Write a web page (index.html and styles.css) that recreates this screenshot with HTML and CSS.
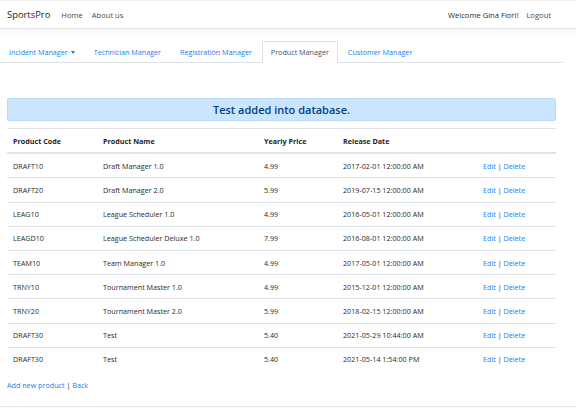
FILE: index.html
```html
<!DOCTYPE html>
<html lang="en">
<head>
<meta charset="utf-8">
<title>SportsPro</title>
<link rel="stylesheet" href="styles.css">
</head>
<body>
<header class="navbar">
  <a class="brand" href="#">SportsPro</a>
  <nav class="nav-left">
    <a href="#">Home</a>
    <a href="#">About us</a>
  </nav>
  <div class="nav-right">
    <span class="welcome">Welcome Gina Fiori!</span>
    <a href="#">Logout</a>
  </div>
</header>

<ul class="tabs">
  <li><a href="#">Incident Manager<span class="caret"></span></a></li>
  <li><a href="#">Technician Manager</a></li>
  <li><a href="#">Registration Manager</a></li>
  <li class="active"><a href="#">Product Manager</a></li>
  <li><a href="#">Customer Manager</a></li>
</ul>

<main class="content">
  <div class="alert">Test added into database.</div>

  <table class="products">
    <thead>
      <tr>
        <th class="c-code">Product Code</th>
        <th class="c-name">Product Name</th>
        <th class="c-price">Yearly Price</th>
        <th class="c-date">Release Date</th>
        <th class="c-act"></th>
      </tr>
    </thead>
    <tbody>
      <tr><td>DRAFT10</td><td>Draft Manager 1.0</td><td>4.99</td><td>2017-02-01 12:00:00 AM</td><td><a href="#">Edit</a> | <a href="#">Delete</a></td></tr>
      <tr><td>DRAFT20</td><td>Draft Manager 2.0</td><td>5.99</td><td>2019-07-15 12:00:00 AM</td><td><a href="#">Edit</a> | <a href="#">Delete</a></td></tr>
      <tr><td>LEAG10</td><td>League Scheduler 1.0</td><td>4.99</td><td>2016-05-01 12:00:00 AM</td><td><a href="#">Edit</a> | <a href="#">Delete</a></td></tr>
      <tr><td>LEAGD10</td><td>League Scheduler Deluxe 1.0</td><td>7.99</td><td>2016-08-01 12:00:00 AM</td><td><a href="#">Edit</a> | <a href="#">Delete</a></td></tr>
      <tr><td>TEAM10</td><td>Team Manager 1.0</td><td>4.99</td><td>2017-05-01 12:00:00 AM</td><td><a href="#">Edit</a> | <a href="#">Delete</a></td></tr>
      <tr><td>TRNY10</td><td>Tournament Master 1.0</td><td>4.99</td><td>2015-12-01 12:00:00 AM</td><td><a href="#">Edit</a> | <a href="#">Delete</a></td></tr>
      <tr><td>TRNY20</td><td>Tournament Master 2.0</td><td>5.99</td><td>2018-02-15 12:00:00 AM</td><td><a href="#">Edit</a> | <a href="#">Delete</a></td></tr>
      <tr><td>DRAFT30</td><td>Test</td><td>5.40</td><td>2021-05-29 10:44:00 AM</td><td><a href="#">Edit</a> | <a href="#">Delete</a></td></tr>
      <tr><td>DRAFT30</td><td>Test</td><td>5.40</td><td>2021-05-14 1:54:00 PM</td><td><a href="#">Edit</a> | <a href="#">Delete</a></td></tr>
    </tbody>
  </table>

  <p class="bottom-links"><a href="#">Add new product</a> | <a href="#">Back</a></p>
</main>

<footer class="footer"></footer>
</body>
</html>
```

FILE: styles.css
```css
* { box-sizing: border-box; }

html, body {
  margin: 0;
  padding: 0;
  background: #fff;
}

body {
  font-family: "Open Sans", "Noto Sans", sans-serif;
  font-size: 7.2px;
  line-height: 12px;
  color: #212529;
}

a {
  color: #1a7ef0;
  text-decoration: none;
}

/* Navbar */
.navbar {
  height: 29px;
  display: flex;
  align-items: center;
  padding: 0 25px 0 7px;
  border-top: 1px solid #f0f0f0;
  border-bottom: 1px solid #e5e5e5;
  box-shadow: 0 2px 6px rgba(0, 0, 0, 0.05);
  font-size: 7.6px;
}

.brand {
  font-size: 9.4px;
  color: #222;
  margin-right: 11px;
}

.nav-left {
  display: flex;
  gap: 9px;
}

.nav-left a,
.nav-right a {
  color: #4a4a4a;
}

.nav-right {
  margin-left: auto;
  display: flex;
  gap: 8px;
}

.welcome {
  color: #2a2a2a;
}

/* Tabs */
.tabs {
  list-style: none;
  margin: 12px 13px 0 0;
  padding: 0;
  display: flex;
  border-bottom: 1px solid #dee2e6;
}

.tabs li {
  margin-bottom: -1px;
}

.tabs a {
  display: block;
  padding: 4px 8px;
  border: 1px solid transparent;
  border-top-left-radius: 2px;
  border-top-right-radius: 2px;
  margin-right: 1px;
}

.tabs .active a {
  color: #495057;
  background: #fff;
  border-color: #dee2e6 #dee2e6 #fff;
}

.caret {
  display: inline-block;
  margin-left: 3px;
  vertical-align: 1px;
  border-top: 3px solid;
  border-left: 2.5px solid transparent;
  border-right: 2.5px solid transparent;
}

/* Content */
.content {
  padding: 0 20px 0 7px;
}

.alert {
  margin-top: 35px;
  height: 23px;
  line-height: 21px;
  text-align: center;
  font-size: 11px;
  font-weight: 600;
  color: #004085;
  background: #cce5ff;
  border: 1px solid #b8daff;
  border-radius: 2px;
}

/* Table */
.products {
  width: 100%;
  margin-top: 7px;
  border-collapse: collapse;
}

.products th,
.products td {
  text-align: left;
  padding: 5.6px 6px;
  border-top: 1px solid #dee2e6;
  white-space: nowrap;
}

.products th {
  font-weight: 700;
  color: #1e1e1e;
  border-bottom: 2px solid #e3e6e9;
}

.c-code { width: 90px; }
.c-name { width: 161px; }
.c-price { width: 79px; }
.c-date { width: 140px; }

.products td {
  color: #2b2b2b;
}

.bottom-links {
  margin: 8px 0 0;
}

.footer {
  margin-top: 15px;
  border-top: 1px solid #e5e5e5;
  height: 7px;
}
```
